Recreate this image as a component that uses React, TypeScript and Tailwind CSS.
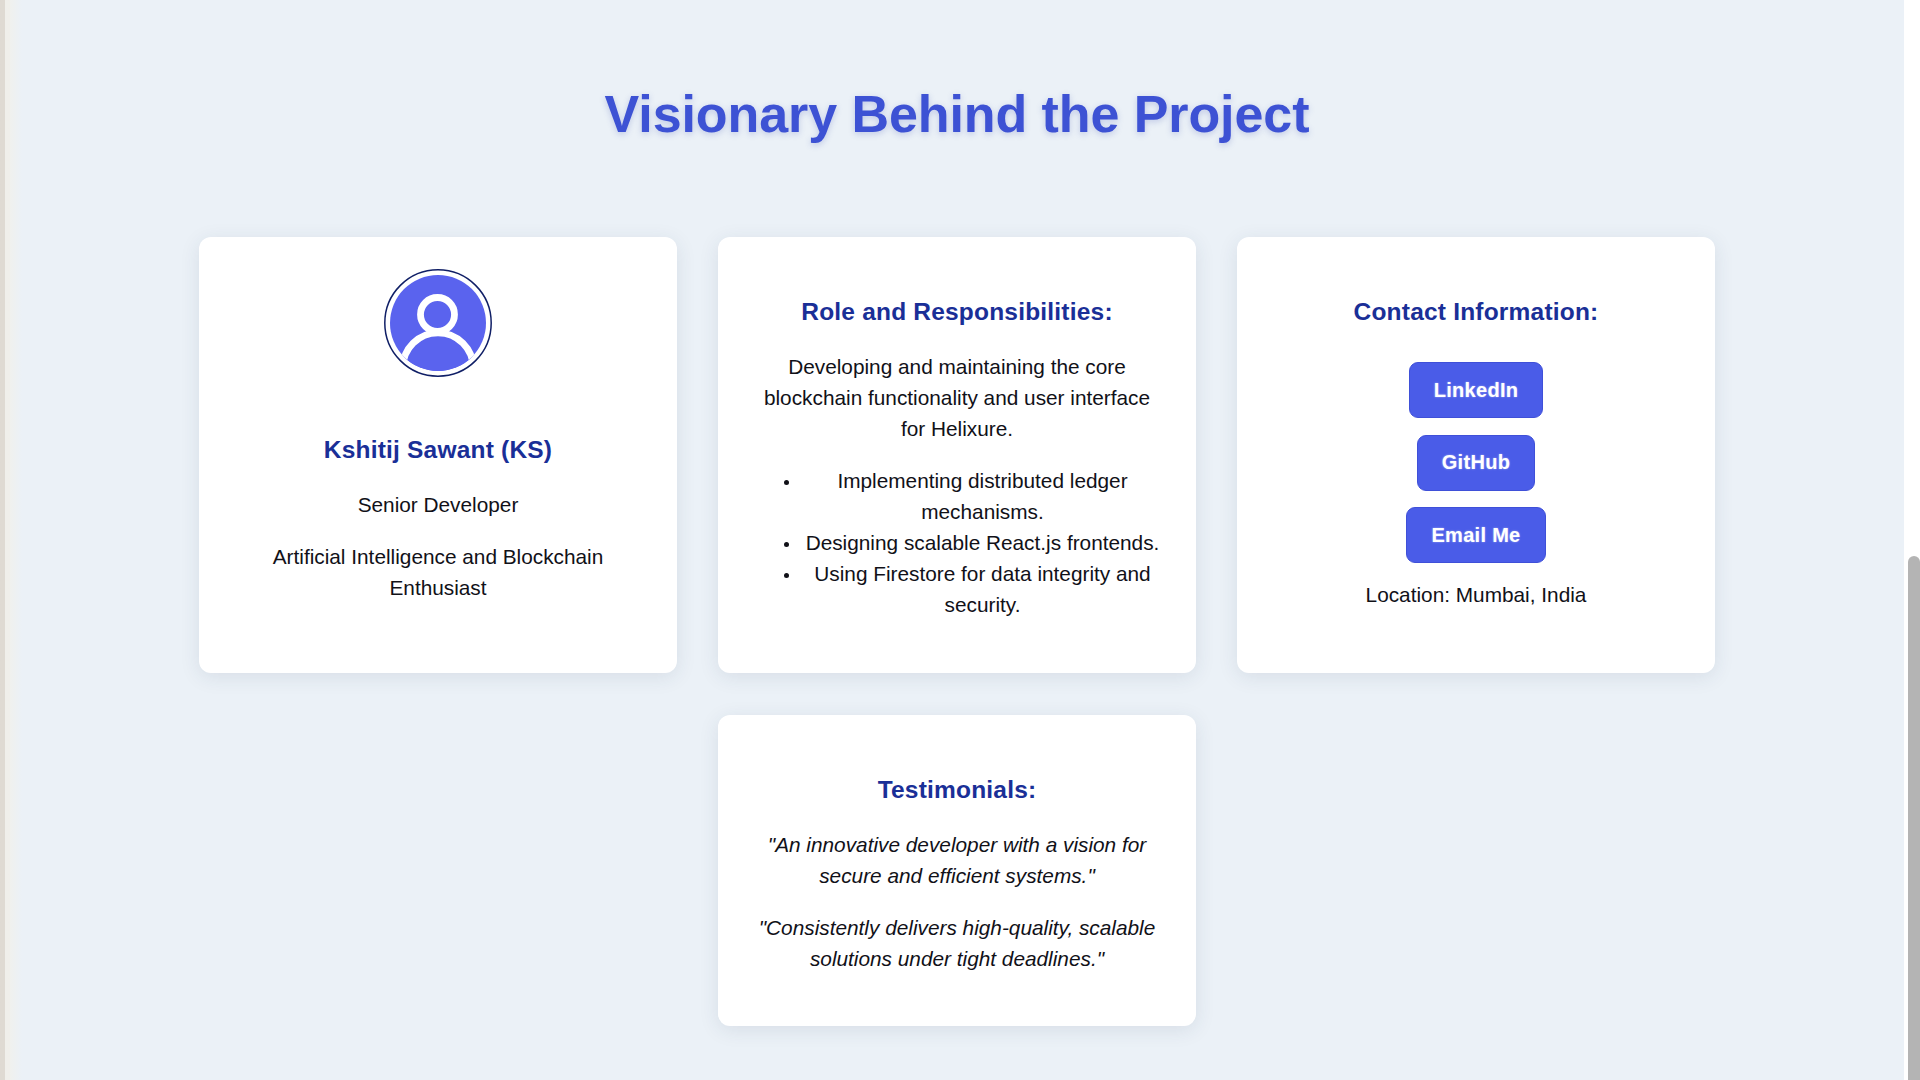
import React from 'react';

const Avatar: React.FC = () => (
  <svg width="108" height="108" viewBox="0 0 108 108" className="block">
    <defs>
      <clipPath id="avatar-clip">
        <circle cx="54" cy="54" r="48" />
      </clipPath>
    </defs>
    <circle cx="54" cy="54" r="53.2" fill="#ffffff" stroke="#101f66" strokeWidth="1.5" />
    <circle cx="54" cy="54" r="48" fill="#5a63ee" />
    <circle cx="53.5" cy="45.5" r="17" fill="#5a63ee" stroke="#ffffff" strokeWidth="6.8" />
    <g clipPath="url(#avatar-clip)">
      <circle cx="54" cy="99" r="35.2" fill="#5a63ee" stroke="#ffffff" strokeWidth="6.8" />
    </g>
  </svg>
);

const cardClass =
  'bg-white rounded-[12px] shadow-[0_4px_20px_rgba(40,60,90,0.1)] text-center text-[#111118] text-[20.8px] leading-[31px]';
const titleClass = 'font-bold text-[24.5px] leading-[30px] tracking-[0.2px] text-[#1a2f97]';
const buttonClass =
  'h-[56px] rounded-[9px] bg-[#4a5ce8] border border-[#3f50d8] text-white font-bold text-[20px] tracking-[0.3px] flex items-center justify-center [text-shadow:0_0_2px_rgba(255,255,255,0.5)]';

export default function App() {
  return (
    <div className="h-screen w-full flex overflow-hidden font-['Liberation_Sans',Arial,sans-serif]">
      <div className="w-[10px] shrink-0 bg-gradient-to-r from-[#dfdad2] from-50% to-[#f0efea] to-50%" />
      <main className="flex-1 min-w-0 bg-[linear-gradient(to_right,#f0f1ee,#ebf1f7_12px)] flex flex-col items-center">
        <h1 className="mt-[82px] text-[52px] leading-[64px] font-bold tracking-[-0.08px] text-[#3d52d4] [text-shadow:0_2px_6px_rgba(60,80,180,0.25)]">
          Visionary Behind the Project
        </h1>
        <div className="mt-[91px] grid grid-cols-[repeat(3,478px)] gap-x-[41px] gap-y-[42px] justify-center">
          <section className={`${cardClass} h-[436px] px-[32px] pt-[32px] flex flex-col items-center`}>
            <Avatar />
            <h2 className={`${titleClass} mt-[58px]`}>Kshitij Sawant (KS)</h2>
            <p className="mt-[24px]">Senior Developer</p>
            <p className="mt-[21px]">Artificial Intelligence and Blockchain Enthusiast</p>
          </section>

          <section className={`${cardClass} h-[436px] px-[32px] pt-[60px]`}>
            <h2 className={titleClass}>Role and Responsibilities:</h2>
            <p className="mt-[24px]">
              Developing and maintaining the core blockchain functionality and user interface for Helixure.
            </p>
            <ul className="mt-[21px] list-disc pl-[51px] marker:text-[17px]">
              <li>Implementing distributed ledger mechanisms.</li>
              <li>Designing scalable React.js frontends.</li>
              <li>Using Firestore for data integrity and security.</li>
            </ul>
          </section>

          <section className={`${cardClass} h-[436px] px-[32px] pt-[60px] flex flex-col items-center`}>
            <h2 className={titleClass}>Contact Information:</h2>
            <div className="mt-[35px] flex flex-col items-center gap-[16.5px]">
              <a className={`${buttonClass} w-[134px]`}>LinkedIn</a>
              <a className={`${buttonClass} w-[118px]`}>GitHub</a>
              <a className={`${buttonClass} w-[140px]`}>Email Me</a>
            </div>
            <p className="mt-[16px]">Location: Mumbai, India</p>
          </section>

          <section className={`${cardClass} col-start-2 h-[311px] px-[32px] pt-[60px]`}>
            <h2 className={titleClass}>Testimonials:</h2>
            <p className="mt-[24px] italic">
              "An innovative developer with a vision for secure and efficient systems."
            </p>
            <p className="mt-[21px] italic">
              "Consistently delivers high-quality, scalable solutions under tight deadlines."
            </p>
          </section>
        </div>
      </main>
      <div className="w-[16px] shrink-0 bg-white flex flex-col items-end pt-[556px]">
        <div className="w-[12px] flex-1 bg-[#b4b4b4] rounded-t-[6px]" />
      </div>
    </div>
  );
}
